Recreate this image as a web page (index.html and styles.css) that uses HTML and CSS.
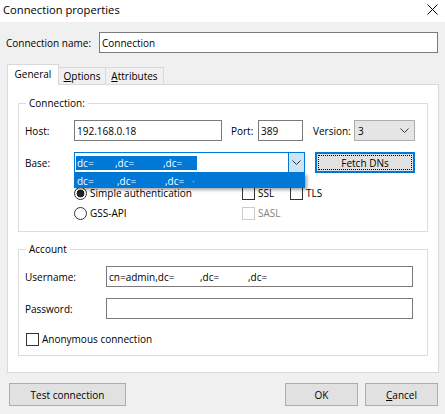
FILE: index.html
```html
<!DOCTYPE html>
<html>
<head>
<meta charset="utf-8">
<link rel="stylesheet" href="styles.css">
</head>
<body>
<div class="window">
  <div class="titlebar">
    <span class="title">Connection properties</span>
    <svg class="close" width="11" height="11" viewBox="0 0 11 11"><path d="M0.5 0.5L10.5 10.5M10.5 0.5L0.5 10.5" stroke="#000" stroke-width="1" fill="none"/></svg>
  </div>

  <div class="name-row">
    <span class="name-label">Connection name:</span>
    <div class="textbox name-input">Connection</div>
  </div>

  <div class="tabs">
    <div class="tab active tab-general">General</div>
    <div class="tab tab-options"><u>O</u>ptions</div>
    <div class="tab tab-attributes"><u>A</u>ttributes</div>
  </div>

  <div class="panel">
    <fieldset class="group conn">
      <legend>Connection:</legend>
      <div class="row host-row">
        <span class="lbl lbl-conn">Host:</span>
        <div class="textbox host-input">192.168.0.18</div>
        <span class="lbl lbl-port">Port:</span>
        <div class="textbox port-input">389</div>
        <span class="lbl lbl-version">Version:</span>
        <div class="combo version-combo">
          <span class="combo-text">3</span>
          <svg class="chev" width="9" height="5" viewBox="0 0 9 5"><path d="M0.5 0.5L4.5 4.5L8.5 0.5" stroke="#333" fill="none"/></svg>
        </div>
      </div>
      <div class="row base-row">
        <span class="lbl lbl-conn">Base:</span>
        <div class="combo base-combo">
          <span class="combo-text"><span class="sel"><span class="seg s1">dc=</span><span class="seg s2">,dc=</span><span class="seg s3">,dc=</span></span></span>
          <span class="drop-btn"><svg class="chev" width="9" height="5" viewBox="0 0 9 5"><path d="M0.5 0.5L4.5 4.5L8.5 0.5" stroke="#333" fill="none"/></svg></span>
          <div class="dropdown"><span class="seg d1">dc=</span><span class="seg d2">,dc=</span><span class="seg d3">,dc=</span><span class="dot">·</span></div>
        </div>
        <div class="btn focus fetch-btn"><span class="focus-ring">Fetch DNs</span></div>
      </div>
      <div class="opts">
        <div class="opt"><span class="radio checked"></span><span>Simple authentication</span></div>
        <div class="opt"><span class="check"></span><span>SSL</span></div>
        <div class="opt"><span class="check"></span><span>TLS</span></div>
        <div class="opt"><span class="radio"></span><span>GSS-API</span></div>
        <div class="opt disabled"><span class="check"></span><span>SASL</span></div>
      </div>
    </fieldset>

    <fieldset class="group account">
      <legend>Account</legend>
      <div class="row user-row">
        <span class="lbl lbl-acc">Username:</span>
        <div class="textbox acc-input"><span class="seg u1">cn=admin,dc=</span><span class="seg u2">,dc=</span><span class="seg">,dc=</span></div>
      </div>
      <div class="row pass-row">
        <span class="lbl lbl-acc">Password:</span>
        <div class="textbox acc-input"></div>
      </div>
      <div class="row anon-row">
        <span class="check"></span><span class="anon-text">Anonymous connection</span>
      </div>
    </fieldset>
  </div>

  <div class="buttons">
    <div class="btn test-btn">Test connection</div>
    <div class="btn ok-btn">OK</div>
    <div class="btn cancel-btn"><u>C</u>ancel</div>
  </div>
</div>
</body>
</html>
```

FILE: styles.css
```css
* { box-sizing: border-box; }

body {
  margin: 0;
  background: #f0f0f0;
  font-family: "Open Sans", "Liberation Sans", Arial, sans-serif;
  font-size: 10px;
  color: #000;
}

.window {
  width: 445px;
  height: 414px;
  overflow: hidden;
}

.titlebar {
  height: 22px;
  background: #fff;
  display: flex;
  align-items: center;
  justify-content: space-between;
  padding: 0 7px 3px 3px;
}

.title {
  font-size: 11.2px;
}

.name-row {
  display: flex;
  align-items: center;
  height: 21px;
  margin-top: 10px;
  padding-left: 6px;
}

.name-label { width: 93px; }

.textbox {
  height: 21px;
  border: 1px solid #7a7a7a;
  background: #fff;
  display: flex;
  align-items: center;
  padding-left: 2px;
  white-space: nowrap;
}

.name-input { width: 339px; }

.tabs {
  display: flex;
  align-items: flex-end;
  height: 20px;
  margin: 11px 0 0 7px;
}

.tab {
  height: 17px;
  border: 1px solid #d9d9d9;
  border-bottom: none;
  background: #f0f0f0;
  display: flex;
  align-items: center;
  justify-content: center;
}

.tab + .tab { border-left: none; }

.tab.active {
  height: 21px;
  margin-bottom: -1px;
  background: #fff;
  position: relative;
  z-index: 1;
  padding-bottom: 3px;
}

.tab-general { width: 52px; }
.tab-options { width: 47px; }
.tab-attributes { width: 58px; }

.panel {
  margin-left: 7px;
  width: 432px;
  height: 289px;
  border: 1px solid #d9d9d9;
  background: #fff;
  padding: 11px 10px 0 10px;
}

.group {
  margin: 0;
  width: 410px;
  min-width: 0;
  border: 1px solid #dcdcdc;
  padding: 0 0 8px 6px;
}

.group legend {
  margin-left: 1px;
  padding: 0 3px;
  height: 15px;
  line-height: 15px;
}

.row {
  display: flex;
  align-items: center;
  height: 21px;
}

.host-row { margin-top: 9px; }
.base-row { margin-top: 11px; }

.lbl-conn { width: 49px; }
.host-input { width: 148px; }
.lbl-port { width: 27px; margin-left: 9px; }
.port-input { width: 45px; }
.lbl-version { width: 41px; margin-left: 10px; }

.combo {
  height: 21px;
  display: flex;
  align-items: center;
  position: relative;
}

.version-combo {
  width: 61px;
  background: #e5e5e5;
  border: 1px solid #adadad;
  padding-left: 3px;
  justify-content: space-between;
  padding-right: 5px;
}

.base-combo {
  width: 231px;
  border: 1px solid #0078d7;
  background: #fff;
}

.base-combo .combo-text {
  flex: 1;
  padding-left: 1px;
  display: flex;
  align-items: center;
}

.sel {
  background: #0078d7;
  color: #fff;
  height: 14px;
  line-height: 14px;
  display: flex;
  padding-left: 1px;
}

.seg { display: inline-block; white-space: nowrap; }
.s1 { width: 38px; }
.s2 { width: 48px; }
.s3 { width: 34px; }

.drop-btn {
  width: 16px;
  height: 19px;
  background: #cce4f7;
  border-left: 1px solid #0078d7;
  display: flex;
  align-items: center;
  justify-content: center;
}

.dropdown {
  position: absolute;
  left: -1px;
  top: 20px;
  width: 231px;
  height: 15px;
  background: #0078d7;
  color: #fff;
  display: flex;
  align-items: center;
  padding-left: 3px;
  box-shadow: 2px 2px 3px rgba(0, 0, 0, 0.35);
  z-index: 2;
}

.d1 { width: 40px; }
.d2 { width: 48px; }
.d3 { width: 27px; }
.dot { opacity: 0.6; }

.btn {
  height: 23px;
  background: #e1e1e1;
  border: 1px solid #adadad;
  display: flex;
  align-items: center;
  justify-content: center;
}

.fetch-btn {
  width: 100px;
  height: 21px;
  margin-left: 10px;
  border: 1px solid #0078d7;
  box-shadow: inset 0 0 0 1px #0078d7;
  padding: 2px;
}

.focus-ring {
  width: 100%;
  height: 100%;
  border: 1px dotted #000;
  display: flex;
  align-items: center;
  justify-content: center;
}

.opts {
  display: grid;
  grid-template-columns: 168px 48px auto;
  grid-auto-rows: 20px;
  margin-top: 10px;
  padding-left: 49px;
}

.opt {
  display: flex;
  align-items: center;
  gap: 3px;
}

.radio {
  width: 13px;
  height: 13px;
  border: 1px solid #333;
  border-radius: 50%;
  background: #fff;
}

.radio.checked {
  background: radial-gradient(circle, #222 0 3.6px, #fff 4.2px);
}

.check {
  width: 13px;
  height: 13px;
  border: 1px solid #333;
  background: #fff;
}

.disabled { color: #838383; }
.disabled .check { border-color: #cccccc; }

.account { margin-top: 10px; padding-bottom: 6px; }

.user-row { margin-top: 9px; }
.pass-row { margin-top: 11px; }
.lbl-acc { width: 81px; }
.acc-input { width: 307px; }
.u1 { width: 91px; }
.u2 { width: 48px; }

.anon-row {
  margin-top: 10px;
  height: 20px;
  padding-left: 1px;
  gap: 3px;
}

.buttons {
  display: flex;
  margin-top: 10px;
  padding: 0 7px 0 9px;
}

.test-btn { width: 117px; }
.ok-btn { width: 73px; margin-left: auto; }
.cancel-btn { width: 73px; margin-left: 7px; }
```
